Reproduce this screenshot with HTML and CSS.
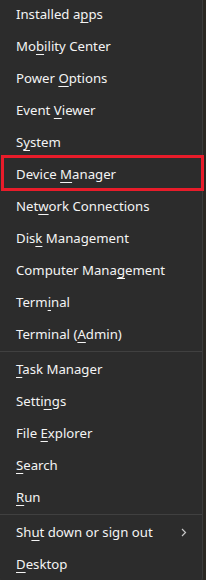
FILE: index.html
```html
<!DOCTYPE html>
<html>
<head>
<meta charset="utf-8">
<link rel="stylesheet" href="styles.css">
</head>
<body>
<div class="menu">
  <div class="item"><span class="label">Installed a<u>p</u>ps</span></div>
  <div class="item"><span class="label">Mo<u>b</u>ility Center</span></div>
  <div class="item"><span class="label">Power <u>O</u>ptions</span></div>
  <div class="item"><span class="label">Event <u>V</u>iewer</span></div>
  <div class="item"><span class="label">S<u>y</u>stem</span></div>
  <div class="item marked"><span class="label">Device <u>M</u>anager</span></div>
  <div class="item"><span class="label">Net<u>w</u>ork Connections</span></div>
  <div class="item"><span class="label">Dis<u>k</u> Management</span></div>
  <div class="item"><span class="label">Computer Mana<u>g</u>ement</span></div>
  <div class="item"><span class="label">Term<u>i</u>nal</span></div>
  <div class="item"><span class="label">Terminal (<u>A</u>dmin)</span></div>
  <div class="sep"></div>
  <div class="item"><span class="label"><u>T</u>ask Manager</span></div>
  <div class="item"><span class="label">Setti<u>n</u>gs</span></div>
  <div class="item"><span class="label">File <u>E</u>xplorer</span></div>
  <div class="item"><span class="label"><u>S</u>earch</span></div>
  <div class="item"><span class="label"><u>R</u>un</span></div>
  <div class="sep"></div>
  <div class="item"><span class="label">Sh<u>u</u>t down or sign out</span><svg class="chev" width="6" height="9" viewBox="0 0 6 9"><path d="M1 1 L4.5 4.5 L1 8" fill="none" stroke="#c8c8c8" stroke-width="1.2"/></svg></div>
  <div class="item"><span class="label"><u>D</u>esktop</span></div>
</div>
</body>
</html>
```
FILE: styles.css
```css
html, body {
  margin: 0;
  padding: 0;
}
body {
  background: #2a2722;
  width: 206px;
  height: 580px;
  overflow: hidden;
  font-family: "Noto Sans", "Open Sans", sans-serif;
}
.menu {
  width: 202px;
  margin-top: -2px;
  padding-bottom: 4px;
  background: #2c2c2c;
  border-right: 1px solid #3b3b3b;
  border-bottom: 1px solid #3b3b3b;
  border-radius: 0 0 8px 8px;
}
.item {
  position: relative;
  height: 32px;
  display: flex;
  align-items: center;
  justify-content: space-between;
  padding: 0 15px 0 16px;
  color: #f4f4f4;
  font-size: 13.2px;
  white-space: nowrap;
}
.item u {
  text-decoration-thickness: 1px;
  text-underline-offset: 3px;
}
.sep {
  height: 1px;
  margin: 1px 0;
  background: #404040;
}
.marked::after {
  content: "";
  position: absolute;
  left: 1px;
  top: -3px;
  width: 197px;
  height: 30px;
  border: 3px solid #e81c2a;
}
.chev {
  display: block;
}
```
